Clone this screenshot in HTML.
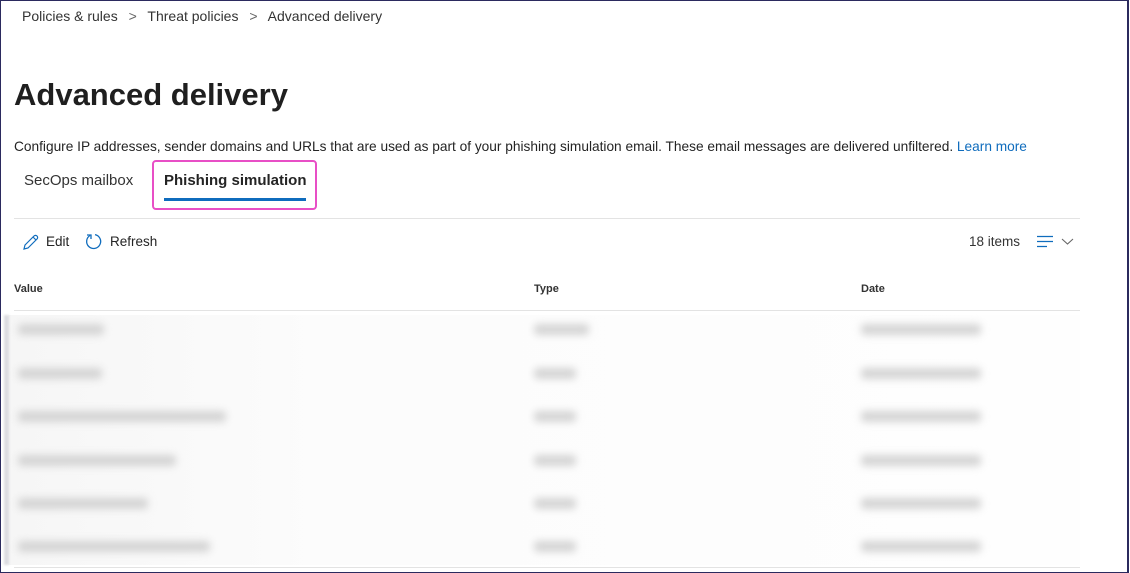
<!DOCTYPE html>
<html><head><style>
body{margin:0;width:1130px;height:573px;background:#fff;font-family:"Liberation Sans",sans-serif;color:#242424;position:relative;overflow:hidden}
.frame{position:absolute;left:0;top:0;width:1126px;height:571px;border:1px solid #2b2a5e;border-right:2px solid #2b2a5e;}
.a{position:absolute;white-space:nowrap}
.bl{position:absolute;height:11px;background:#d4d4d4;filter:blur(4px);border-radius:4px}
.row{position:absolute;left:8px;width:1072px;height:250px;top:315px;background:linear-gradient(90deg,#f6f6f6,#fcfcfc 30%,#fefefe)}
</style></head><body>
<div class="frame"></div>
<div class="a" style="left:22px;top:8px;font-size:14px;color:#333">Policies &amp; rules <span style="margin:0 7px;color:#666">&gt;</span> Threat policies <span style="margin:0 7px;color:#666">&gt;</span> Advanced delivery</div>
<div class="a" style="left:14px;top:77px;font-size:31px;font-weight:bold;color:#1f1f1f">Advanced delivery</div>
<div class="a" style="left:14px;top:139px;font-size:13.7px;color:#242424">Configure IP addresses, sender domains and URLs that are used as part of your phishing simulation email. These email messages are delivered unfiltered. <span style="color:#0f6cbd">Learn more</span></div>
<div class="a" style="left:24px;top:172px;font-size:15px;color:#333">SecOps mailbox</div>
<div class="a" style="left:152px;top:160px;width:165px;height:50px;border:2px solid #e84fc6;border-radius:4px;box-sizing:border-box"></div>
<div class="a" style="left:164px;top:172px;font-size:15px;font-weight:bold;color:#242424">Phishing simulation</div>
<div class="a" style="left:164px;top:198px;width:142px;height:3px;background:#0f6cbd"></div>
<div class="a" style="left:14px;top:218px;width:1066px;height:1px;background:#e3e3e3"></div>
<svg class="a" style="left:22px;top:233px" width="18" height="18" viewBox="0 0 18 18"><path d="M2 16l1-4L12 3a2 2 0 013 3l-9 9z M11 4l3 3" fill="none" stroke="#0f6cbd" stroke-width="1.2"/></svg>
<div class="a" style="left:46px;top:234px;font-size:13.5px">Edit</div>
<svg class="a" style="left:84px;top:232px" width="19" height="19" viewBox="0 0 19 19"><path d="M6 3.5A7 7 0 1 0 11 2.6" fill="none" stroke="#0f6cbd" stroke-width="1.3"/><path d="M3 3h4v4" fill="none" stroke="#0f6cbd" stroke-width="1.3"/></svg>
<div class="a" style="left:110px;top:234px;font-size:13.5px">Refresh</div>
<div class="a" style="left:969px;top:234px;font-size:13.5px;color:#333">18 items</div>
<svg class="a" style="left:1037px;top:235px" width="40" height="14"><path d="M0 1.5h16M0 6.5h16M0 11.5h10" stroke="#0f6cbd" stroke-width="1.3"/><path d="M25 4l5.5 5 5.5-5" fill="none" stroke="#666" stroke-width="1.1"/></svg>
<div class="a" style="left:14px;top:283px;font-size:11px;font-weight:bold;color:#333">Value</div>
<div class="a" style="left:534px;top:283px;font-size:11px;font-weight:bold;color:#333">Type</div>
<div class="a" style="left:861px;top:283px;font-size:11px;font-weight:bold;color:#333">Date</div>
<div class="a" style="left:14px;top:310px;width:1066px;height:1px;background:#e3e3e3"></div>
<div class="row"></div>
<div class="a" style="left:4px;top:315px;width:5px;height:250px;background:#dcdce0;filter:blur(1px)"></div>
<div class="bl" style="left:18px;top:324px;width:86px"></div><div class="bl" style="left:534px;top:324px;width:55px"></div><div class="bl" style="left:861px;top:324px;width:120px"></div>
<div class="bl" style="left:18px;top:368px;width:84px"></div><div class="bl" style="left:534px;top:368px;width:42px"></div><div class="bl" style="left:861px;top:368px;width:120px"></div>
<div class="bl" style="left:18px;top:411px;width:208px"></div><div class="bl" style="left:534px;top:411px;width:42px"></div><div class="bl" style="left:861px;top:411px;width:120px"></div>
<div class="bl" style="left:18px;top:455px;width:158px"></div><div class="bl" style="left:534px;top:455px;width:42px"></div><div class="bl" style="left:861px;top:455px;width:120px"></div>
<div class="bl" style="left:18px;top:498px;width:130px"></div><div class="bl" style="left:534px;top:498px;width:42px"></div><div class="bl" style="left:861px;top:498px;width:120px"></div>
<div class="bl" style="left:18px;top:541px;width:192px"></div><div class="bl" style="left:534px;top:541px;width:42px"></div><div class="bl" style="left:861px;top:541px;width:120px"></div>
<div class="a" style="left:14px;top:567px;width:1066px;height:1px;background:#e3e3e3"></div>
</body></html>
